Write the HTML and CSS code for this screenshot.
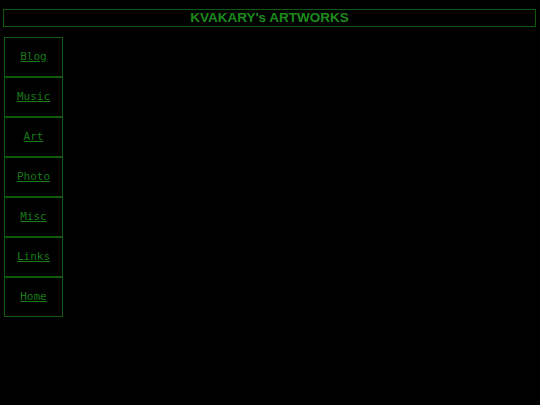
FILE: index.html
```html
<!DOCTYPE html>
<html>
<head>
<meta charset="utf-8">
<link rel="stylesheet" href="styles.css">
</head>
<body>
<div class="header">KVAKARY's ARTWORKS</div>
<nav class="nav">
  <a class="item" href="#">Blog</a>
  <a class="item" href="#">Music</a>
  <a class="item" href="#">Art</a>
  <a class="item" href="#">Photo</a>
  <a class="item" href="#">Misc</a>
  <a class="item" href="#">Links</a>
  <a class="item" href="#">Home</a>
</nav>
</body>
</html>
```
FILE: styles.css
```css
html, body {
  margin: 0;
  padding: 0;
  background: #000;
}
body {
  padding: 9px 4px 0 3px;
}
.header {
  border: 1px solid #0d5a0d;
  height: 16px;
  line-height: 16px;
  text-align: center;
  font-family: "Liberation Sans", Arial, sans-serif;
  font-weight: bold;
  font-size: 13.5px;
  color: #1b8a1b;
}
.nav {
  display: flex;
  flex-direction: column;
  margin-top: 10px;
  margin-left: 1px;
  width: 59px;
}
.item {
  box-sizing: border-box;
  height: 40px;
  padding-bottom: 1px;
  border: 1px solid #0d5a0d;
  display: flex;
  align-items: center;
  justify-content: center;
  font-family: "DejaVu Sans Mono", monospace;
  font-size: 11px;
  color: #187a18;
  text-decoration: underline;
}
```
